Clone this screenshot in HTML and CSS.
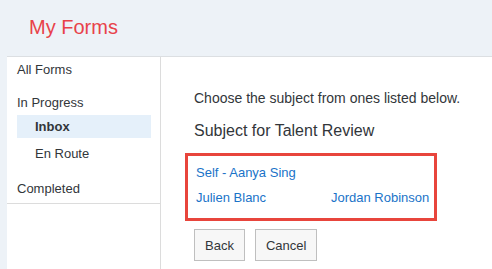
FILE: index.html
```html
<!DOCTYPE html>
<html>
<head>
<meta charset="utf-8">
<link rel="stylesheet" href="styles.css">
</head>
<body>
<header class="header"><h1 class="title">My Forms</h1></header>
<div class="main">
  <nav class="sidebar">
    <div class="nav-list">
      <div class="nav-item">All Forms</div>
      <div class="nav-item group">In Progress</div>
      <div class="nav-sub active">Inbox</div>
      <div class="nav-sub">En Route</div>
      <div class="nav-item completed">Completed</div>
    </div>
  </nav>
  <section class="content">
    <p class="intro">Choose the subject from ones listed below.</p>
    <h2 class="subtitle">Subject for Talent Review</h2>
    <div class="subjects">
      <a class="subject self">Self - Aanya Sing</a>
      <span></span>
      <a class="subject">Julien Blanc</a>
      <a class="subject">Jordan Robinson</a>
    </div>
    <div class="actions">
      <button class="btn">Back</button>
      <button class="btn">Cancel</button>
    </div>
  </section>
</div>
</body>
</html>
```
FILE: styles.css
```css
* { box-sizing: border-box; }
html, body { margin: 0; padding: 0; }
body {
  background: #edf2f7;
  font-family: "Liberation Sans", Arial, sans-serif;
  color: #32363a;
  width: 492px;
  height: 269px;
  overflow: hidden;
}
.header {
  height: 56px;
  display: flex;
  align-items: center;
  padding-left: 29px;
}
.title {
  margin: 0;
  font-size: 20px;
  font-weight: normal;
  color: #e8424a;
  line-height: 24px;
  padding-bottom: 2px;
}
.main {
  margin-left: 7px;
  border-top: 1px solid #dcdfe2;
  background: #fff;
  display: flex;
  height: 213px;
}
.sidebar {
  width: 154px;
  border-right: 1px solid #dcdcdc;
  flex: none;
}
.nav-list {
  border-bottom: 1px solid #dcdcdc;
  padding-bottom: 2px;
  font-size: 13px;
}
.nav-item {
  padding-left: 10px;
  line-height: 25px;
}
.nav-item.group { margin-top: 8px; }
.nav-item.completed { margin-top: 10px; }
.nav-sub {
  margin: 0 9px 0 10px;
  padding-left: 18px;
  line-height: 23px;
}
.nav-sub.active {
  background: #e5f0fa;
  font-weight: bold;
}
.nav-sub + .nav-sub { margin-top: 4px; line-height: 24px; }
.content {
  flex: 1;
  padding: 32px 0 0 33px;
}
.intro {
  margin: 0;
  font-size: 14px;
  line-height: 18px;
}
.subtitle {
  margin: 14px 0 0;
  font-size: 16px;
  font-weight: normal;
  line-height: 20px;
}
.subjects {
  margin: 12px 0 0 -9px;
  width: 252px;
  height: 68px;
  border: 3px solid #e8453c;
  padding: 4px 0 0 8px;
  display: grid;
  grid-template-columns: 135px auto;
  grid-auto-rows: 25px;
  align-items: center;
}
.subject {
  color: #1a73c8;
  font-size: 13px;
  line-height: 16px;
  text-decoration: none;
}
.actions {
  margin-top: 8px;
  display: flex;
  gap: 10px;
}
.btn {
  height: 32px;
  padding: 0 10px;
  background: #f7f7f7;
  border: 1px solid #bfbfbf;
  border-radius: 0;
  color: #32363a;
  font-family: inherit;
  font-size: 13px;
}
```
